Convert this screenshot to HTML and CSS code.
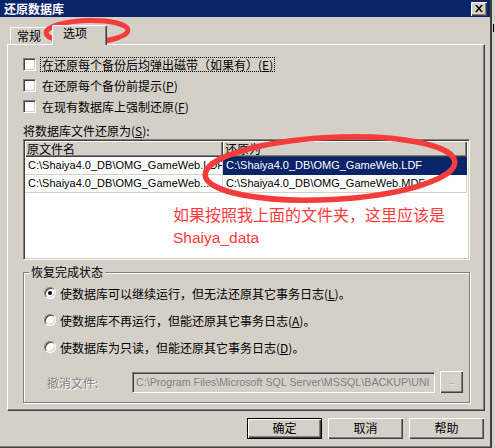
FILE: index.html
```html
<!DOCTYPE html>
<html lang="zh-CN">
<head>
<meta charset="utf-8">
<title>还原数据库</title>
<link rel="stylesheet" href="styles.css">
</head>
<body>
<div class="screen">
  <div class="dialog">
    <div class="titlebar">
      <span class="title">还原数据库</span>
      <span class="close">
        <svg width="8" height="7" viewBox="0 0 8 7"><path d="M0 0h2l2 2.5L6 0h2L5 3.5 8 7H6L4 4.5 2 7H0l3-3.5z" fill="#000"/></svg>
      </span>
    </div>
    <div class="tabs">
      <div class="tab">常规</div>
      <div class="tab active">选项</div>
    </div>
    <div class="panel">
      <div class="checks">
        <div class="check"><span class="box"></span><span class="lbl focus">在还原每个备份后均弹出磁带（如果有）(<u>E</u>)</span></div>
        <div class="check"><span class="box"></span><span class="lbl">在还原每个备份前提示(<u>P</u>)</span></div>
        <div class="check"><span class="box"></span><span class="lbl">在现有数据库上强制还原(<u>F</u>)</span></div>
      </div>
      <div class="caption">将数据库文件还原为(<u>S</u>):</div>
      <div class="grid">
        <div class="row head">
          <div class="cell c1">原文件名</div>
          <div class="cell c2">还原为</div>
        </div>
        <div class="row">
          <div class="cell c1">C:\Shaiya4.0_DB\OMG_GameWeb.LDF</div>
          <div class="cell c2 sel">C:\Shaiya4.0_DB\OMG_GameWeb.LDF</div>
        </div>
        <div class="row">
          <div class="cell c1">C:\Shaiya4.0_DB\OMG_GameWeb....</div>
          <div class="cell c2">C:\Shaiya4.0_DB\OMG_GameWeb.MDF</div>
        </div>
      </div>
      <fieldset class="group">
        <legend>恢复完成状态</legend>
        <div class="opt first"><span class="radio on"></span><span>使数据库可以继续运行，但无法还原其它事务日志(<u>L</u>)。</span></div>
        <div class="opt"><span class="radio"></span><span>使数据库不再运行，但能还原其它事务日志(<u>A</u>)。</span></div>
        <div class="opt"><span class="radio"></span><span>使数据库为只读，但能还原其它事务日志(<u>D</u>)。</span></div>
        <div class="undo">
          <span class="undo-lbl">撤消文件:</span>
          <span class="field">C:\Program Files\Microsoft SQL Server\MSSQL\BACKUP\UNI</span>
          <span class="browse">...</span>
        </div>
      </fieldset>
    </div>
    <div class="buttons">
      <span class="btn default">确定</span>
      <span class="btn">取消</span>
      <span class="btn">帮助</span>
    </div>
  </div>
  <div class="edge"><span class="mark"></span></div>

  <svg class="marks" width="495" height="448" viewBox="0 0 495 448">
    <ellipse cx="87" cy="31.5" rx="41" ry="11" fill="none" stroke="#f43c3c" stroke-width="5" transform="rotate(-2 87 31.5)"/>
    <ellipse cx="330" cy="168.5" rx="125" ry="31" fill="none" stroke="#f43c3c" stroke-width="5.5" transform="rotate(-3 330 168.5)"/>
  </svg>
  <div class="note">如果按照我上面的文件夹，这里应该是<br><span class="latin">Shaiya_data</span></div>
</div>
</body>
</html>
```

FILE: styles.css
```css
* {
  box-sizing: border-box;
  margin: 0;
  padding: 0;
}

html, body {
  width: 495px;
  height: 448px;
  overflow: hidden;
}

body {
  background: #d4d0c8;
  font-family: "Noto Sans CJK SC", "Liberation Sans", sans-serif;
  font-size: 12px;
  color: #000;
}

u {
  text-decoration: underline;
  text-underline-offset: 1px;
}

.screen {
  position: relative;
  display: flex;
  width: 495px;
  height: 448px;
}

.dialog {
  width: 490px;
  height: 448px;
  display: flex;
  flex-direction: column;
  background: #d4d0c8;
  border-bottom: 1px solid #404040;
  box-shadow: inset 0 -1px 0 #808080;
}

.edge {
  width: 5px;
  height: 448px;
  border-left: 2px solid #404040;
  background: #d4d0c8;
  display: flex;
  flex-direction: column;
}

.mark {
  width: 1px;
  height: 8px;
  margin: 24px 0 0 1px;
  background: #000;
}

/* Title bar */
.titlebar {
  height: 17px;
  flex: none;
  background: #0a246a;
  display: flex;
  align-items: center;
  justify-content: space-between;
  padding: 0 3px 0 4px;
}

.title {
  color: #fff;
  font-weight: 700;
  font-size: 12px;
  line-height: 14px;
}

.close {
  width: 16px;
  height: 14px;
  background: #d4d0c8;
  display: flex;
  align-items: center;
  justify-content: center;
  box-shadow: inset 1px 1px 0 #fff, inset -1px -1px 0 #404040, inset -2px -2px 0 #808080;
}

/* Tabs */
.tabs {
  display: flex;
  align-items: flex-end;
  padding: 8px 0 0 10px;
  flex: none;
}

.tab {
  height: 17px;
  width: 44px;
  padding-left: 6px;
  line-height: 16px;
  background: #d4d0c8;
  border-top: 1px solid #fff;
  border-left: 1px solid #fff;
  border-right: 1px solid #404040;
  border-radius: 2px 2px 0 0;
  box-shadow: inset -1px 0 0 #808080;
}

.tab.active {
  position: relative;
  z-index: 1;
  height: 20px;
  width: 55px;
  margin-left: -2px;
  margin-bottom: -1px;
  padding-left: 10px;
  line-height: 14px;
}

/* Panel */
.panel {
  width: 478px;
  height: 367px;
  margin-left: 7px;
  flex: none;
  border-top: 1px solid #fff;
  border-left: 1px solid #fff;
  border-right: 1px solid #404040;
  border-bottom: 1px solid #404040;
  box-shadow: inset -1px -1px 0 #808080;
  display: flex;
  flex-direction: column;
  padding: 13px 0 0 15px;
}

.checks {
  display: flex;
  flex-direction: column;
  gap: 8px;
}

.check {
  display: flex;
  align-items: center;
  height: 13px;
}

.box {
  width: 13px;
  height: 13px;
  flex: none;
  background: #fff;
  border-top: 1px solid #808080;
  border-left: 1px solid #808080;
  border-right: 1px solid #fff;
  border-bottom: 1px solid #fff;
  box-shadow: inset 1px 1px 0 #404040, inset -1px -1px 0 #d4d0c8;
}

.lbl {
  margin-left: 4px;
  line-height: 13px;
  padding: 0 1px;
  border: 1px solid transparent;
  white-space: nowrap;
}

.lbl.focus {
  border: 1px dotted #000;
}

.caption {
  margin-top: 11px;
  line-height: 14px;
  height: 14px;
}

/* File grid */
.grid {
  margin-top: 1px;
  width: 447px;
  height: 121px;
  flex: none;
  background: #fff;
  border-top: 1px solid #808080;
  border-left: 1px solid #808080;
  border-right: 1px solid #fff;
  border-bottom: 1px solid #fff;
  box-shadow: inset 1px 1px 0 #404040, inset -1px -1px 0 #d4d0c8;
  padding: 1px;
  font-family: "Liberation Sans", "Noto Sans CJK SC", sans-serif;
  font-size: 11px;
}

.row {
  display: flex;
  height: 18px;
}

.row.head {
  height: 16px;
  font-family: "Noto Sans CJK SC", sans-serif;
  font-size: 12px;
}

.cell {
  overflow: hidden;
  white-space: nowrap;
  line-height: 17px;
  padding-left: 3px;
  border-bottom: 1px solid #d4d0c8;
  border-right: 1px solid #d4d0c8;
}

.c1 { width: 198px; }
.c2 { width: 244px; }

.head .cell {
  background: #d4d0c8;
  line-height: 15px;
  padding-left: 2px;
  border: none;
  box-shadow: inset 1px 1px 0 #fff, inset -1px -1px 0 #404040, inset -2px -2px 0 #808080;
}

.sel {
  background: #0a246a;
  color: #fff;
  border-color: #0a246a;
}

/* Group box */
.group {
  margin-top: 5px;
  width: 447px;
  height: 138px;
  flex: none;
  border: 1px solid #808080;
  box-shadow: 1px 1px 0 #fff, inset 1px 1px 0 #fff;
  padding: 0 0 0 20px;
  display: flex;
  flex-direction: column;
  min-inline-size: 0;
}

.group legend {
  margin-left: -15px;
  padding: 0 2px;
  line-height: 14px;
  background: #d4d0c8;
}

.opt {
  display: flex;
  align-items: center;
  gap: 4px;
  height: 14px;
  margin-top: 13px;
  white-space: nowrap;
}

.opt.first {
  margin-top: 7px;
}

.radio {
  width: 12px;
  height: 12px;
  flex: none;
  border-radius: 50%;
  background: #fff;
  border: 1px solid;
  border-color: #808080 #fff #fff #808080;
  box-shadow: inset 1px 1px 0 #404040, inset -1px -1px 0 #d4d0c8;
  display: flex;
  align-items: center;
  justify-content: center;
}

.radio.on::after {
  content: "";
  width: 4px;
  height: 4px;
  border-radius: 50%;
  background: #000;
}

.undo {
  display: flex;
  align-items: center;
  height: 22px;
  margin-top: 17px;
  margin-left: 3px;
}

.undo-lbl {
  width: 85px;
  color: #808080;
  text-shadow: 1px 1px 0 #fff;
}

.field {
  width: 303px;
  height: 21px;
  margin-top: 1px;
  background: #d4d0c8;
  border-top: 1px solid #808080;
  border-left: 1px solid #808080;
  border-right: 1px solid #fff;
  border-bottom: 1px solid #fff;
  box-shadow: inset 1px 1px 0 #404040;
  color: #808080;
  font-family: "Liberation Sans", sans-serif;
  font-size: 10.7px;
  line-height: 19px;
  padding-left: 3px;
  overflow: hidden;
  white-space: nowrap;
}

.browse {
  width: 23px;
  height: 22px;
  margin-left: 5px;
  box-shadow: inset 1px 1px 0 #fff, inset -1px -1px 0 #404040, inset -2px -2px 0 #808080;
  color: #808080;
  text-shadow: 1px 1px 0 #fff;
  font-family: "Liberation Sans", sans-serif;
  font-size: 8px;
  line-height: 22px;
  text-align: center;
}

/* Buttons */
.buttons {
  display: flex;
  justify-content: flex-end;
  gap: 6px;
  padding-right: 6px;
  margin-top: 7px;
}

.btn {
  width: 75px;
  height: 21px;
  text-align: center;
  line-height: 20px;
  background: #d4d0c8;
  box-shadow: inset 1px 1px 0 #fff, inset -1px -1px 0 #404040, inset -2px -2px 0 #808080;
}

.btn.default {
  border: 1px solid #000;
  line-height: 18px;
}

/* Annotation overlay */
.marks {
  position: absolute;
  left: 0;
  top: 0;
  pointer-events: none;
}

.note {
  position: absolute;
  left: 173px;
  top: 203px;
  color: #ff3b3b;
  font-family: "Noto Sans CJK SC", sans-serif;
  font-size: 16px;
  line-height: 22px;
  white-space: nowrap;
}

.note .latin {
  font-family: "Liberation Sans", sans-serif;
  font-size: 15.5px;
}
```
